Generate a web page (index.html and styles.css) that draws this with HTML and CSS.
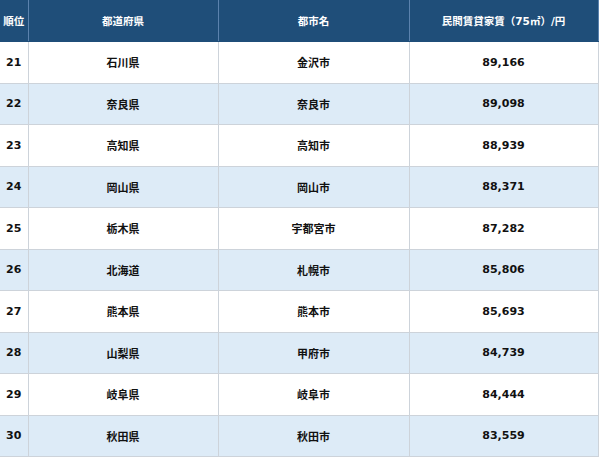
FILE: index.html
```html
<!DOCTYPE html>
<html lang="ja">
<head>
<meta charset="utf-8">
<link rel="stylesheet" href="styles.css">
</head>
<body>
<table class="rank">
  <colgroup>
    <col class="c1"><col class="c2"><col class="c3"><col class="c4">
  </colgroup>
  <thead>
    <tr><th>順位</th><th>都道府県</th><th>都市名</th><th>民間賃貸家賃（75㎡）/円</th></tr>
  </thead>
  <tbody>
    <tr><td class="num">21</td><td>石川県</td><td>金沢市</td><td class="val">89,166</td></tr>
    <tr class="alt"><td class="num">22</td><td>奈良県</td><td>奈良市</td><td class="val">89,098</td></tr>
    <tr><td class="num">23</td><td>高知県</td><td>高知市</td><td class="val">88,939</td></tr>
    <tr class="alt"><td class="num">24</td><td>岡山県</td><td>岡山市</td><td class="val">88,371</td></tr>
    <tr><td class="num">25</td><td>栃木県</td><td>宇都宮市</td><td class="val">87,282</td></tr>
    <tr class="alt"><td class="num">26</td><td>北海道</td><td>札幌市</td><td class="val">85,806</td></tr>
    <tr><td class="num">27</td><td>熊本県</td><td>熊本市</td><td class="val">85,693</td></tr>
    <tr class="alt"><td class="num">28</td><td>山梨県</td><td>甲府市</td><td class="val">84,739</td></tr>
    <tr><td class="num">29</td><td>岐阜県</td><td>岐阜市</td><td class="val">84,444</td></tr>
    <tr class="alt"><td class="num">30</td><td>秋田県</td><td>秋田市</td><td class="val">83,559</td></tr>
  </tbody>
</table>
</body>
</html>
```
FILE: styles.css
```css
html, body {
  margin: 0;
  padding: 0;
  background: #ffffff;
}
.rank {
  border-collapse: collapse;
  table-layout: fixed;
  width: 598px;
  font-family: "Noto Sans CJK JP", "Noto Sans", sans-serif;
  font-weight: bold;
  font-size: 11px;
  color: #111111;
}
.c1 { width: 28px; }
.c2 { width: 190px; }
.c3 { width: 191px; }
.c4 { width: 189px; }
.rank th {
  background: #1f4e79;
  color: #ffffff;
  height: 41px;
  padding: 0;
  text-align: center;
  border-left: 1px solid #5b82ad;
  border-right: 1px solid #5b82ad;
  border-bottom: 1px solid #1f4e79;
  font-weight: bold;
  font-family: "DejaVu Sans", "Noto Sans CJK JP", sans-serif;
  font-size: 10.5px;
}
.rank th:first-child { border-left: none; font-family: "Noto Sans CJK JP", sans-serif; font-size: 10.5px; }
.rank td {
  height: 40.5px;
  padding: 0;
  text-align: center;
  border: 1px solid #cdd3da;
}
.rank td.num {
  text-align: left;
  padding-left: 6px;
  font-family: "DejaVu Sans", sans-serif;
  font-size: 11px;
}
.rank td.val {
  font-family: "DejaVu Sans", sans-serif;
  font-size: 11px;
}
.rank td:first-child { border-left: none; }
.rank tr.alt td { background: #ddebf7; }
```
